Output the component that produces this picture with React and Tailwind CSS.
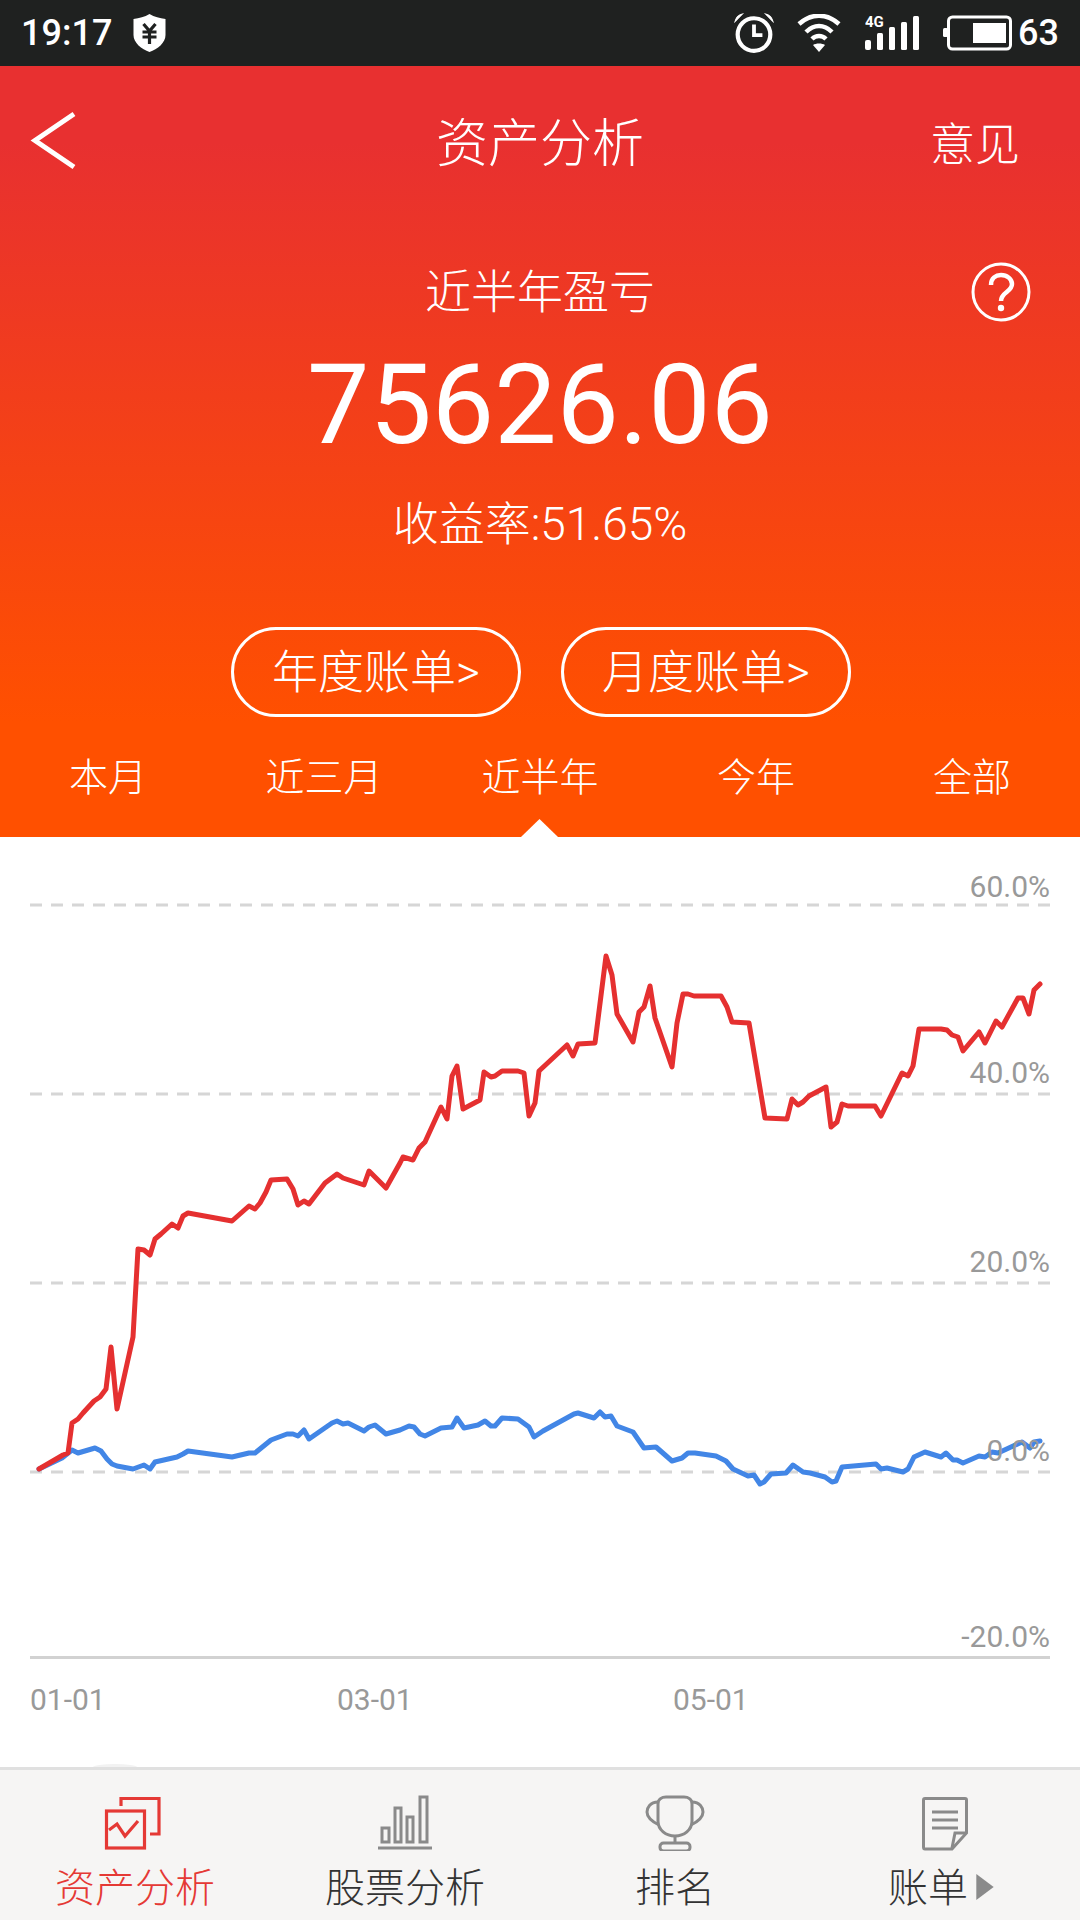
import React from "react";

const redLine =
  "39,1469 63,1455 68,1453 72,1423 78,1419 83,1413 94,1401 100,1397 106,1389 111,1347 117,1409 133,1337 138,1249 144,1250 150,1255 155,1239 161,1234 172,1224 178,1228 183,1216 188,1213 232,1221 249,1206 255,1209 260,1203 266,1192 271,1180 287,1179 293,1189 298,1205 304,1201 309,1204 325,1183 337,1174 343,1178 364,1185 369,1171 386,1188 400,1163 403,1157 413,1160 419,1148 425,1142 441,1107 447,1119 452,1076 457,1066 463,1109 480,1100 484,1072 491,1077 495,1076 502,1071 518,1071 524,1073 529,1116 535,1103 539,1071 567,1045 573,1056 578,1044 595,1043 606,956 612,975 617,1014 633,1042 639,1012 644,1007 650,986 655,1018 672,1067 677,1023 683,994 688,994 694,996 721,996 727,1007 732,1022 749,1023 765,1118 787,1119 792,1099 798,1105 803,1102 809,1096 826,1087 831,1127 837,1122 842,1104 848,1106 875,1106 881,1116 902,1073 908,1076 913,1066 919,1029 941,1029 947,1030 952,1035 958,1037 963,1051 979,1032 985,1043 996,1021 1002,1027 1018,998 1023,998 1029,1014 1034,990 1040,984";

const blueLine =
  "39,1469 62,1458 72,1450 78,1453 95,1448 101,1451 107,1459 112,1464 117,1466 133,1469 144,1465 150,1469 155,1462 177,1457 183,1454 188,1451 232,1457 249,1453 255,1453 271,1440 287,1434 293,1434 298,1436 304,1430 309,1439 332,1423 337,1421 343,1424 348,1423 364,1431 369,1427 375,1425 386,1434 400,1430 409,1426 414,1427 420,1434 425,1436 441,1428 452,1427 457,1418 464,1428 478,1425 485,1421 491,1426 495,1426 502,1418 518,1419 529,1427 534,1437 543,1431 574,1414 578,1413 594,1418 600,1412 605,1417 611,1416 617,1426 633,1432 644,1448 656,1447 672,1461 682,1458 688,1453 695,1453 716,1456 726,1461 733,1469 748,1476 754,1475 760,1484 764,1482 771,1474 786,1473 793,1465 803,1472 810,1473 825,1477 832,1482 836,1481 842,1467 876,1464 881,1469 887,1468 903,1472 908,1469 914,1457 925,1452 941,1457 946,1453 953,1460 957,1460 963,1463 979,1456 985,1457 992,1452 998,1453 1022,1442 1030,1448 1034,1442 1040,1441";

const grid = [905, 1094, 1283, 1472];

const yLabels = [
  { text: "60.0%", y: 897 },
  { text: "40.0%", y: 1083 },
  { text: "20.0%", y: 1272 },
  { text: "0.0%", y: 1461 },
  { text: "-20.0%", y: 1647 },
];

const xLabels = [
  { text: "01-01", x: 30 },
  { text: "03-01", x: 337 },
  { text: "05-01", x: 673 },
];

const tabs = ["本月", "近三月", "近半年", "今年", "全部"];

const StatusBar = () => (
  <div className="h-[66px] shrink-0 bg-[#1f2120] flex items-center justify-between pl-[21px] pr-[21px] text-white text-[36px] font-medium">
    <div className="flex items-center gap-[21px]">
      <span>19:17</span>
      <svg width="33" height="38" viewBox="0 0 32 38">
        <path d="M16 0 C21 3 26 4 32 5 V21 C32 29 24 35 16 38 C8 35 0 29 0 21 V5 C6 4 11 3 16 0 Z" fill="#fff" />
        <path d="M10 10 L16 17 L22 10 M9 18 H23 M9 23 H23 M16 17 V30" stroke="#1f2120" strokeWidth="3.2" fill="none" />
      </svg>
    </div>
    <div className="flex items-center">
      <svg width="40" height="40" viewBox="0 0 38 38" className="mr-[23px]">
        <circle cx="19" cy="20.5" r="15.5" fill="none" stroke="#fff" strokeWidth="4" />
        <path d="M19 11 V21 H27" fill="none" stroke="#fff" strokeWidth="3.6" />
        <path d="M1 8 C2 4 4 2 8 1 Z M37 8 C36 4 34 2 30 1 Z" fill="#fff" stroke="#fff" strokeWidth="1" />
      </svg>
      <svg width="44" height="38" viewBox="0 0 44 38" className="mr-[24px]">
        <path d="M2 10 C14 -1 30 -1 42 10" fill="none" stroke="#fff" strokeWidth="4.5" />
        <path d="M9 18 C17 10 27 10 35 18" fill="none" stroke="#fff" strokeWidth="4.5" />
        <path d="M15 25 C19 21 25 21 29 25" fill="none" stroke="#fff" strokeWidth="4.5" />
        <path d="M22 38 L16 31 C19 29 25 29 28 31 Z" fill="#fff" />
      </svg>
      <svg width="56" height="38" viewBox="0 0 56 38" className="mr-[22px]">
        <text x="0" y="13" fontSize="15" fontWeight="700" fill="#fff">4G</text>
        <rect x="0" y="26" width="6" height="10" rx="2" fill="#fff" />
        <rect x="12" y="19" width="6" height="17" rx="1.5" fill="#fff" />
        <rect x="24" y="13" width="6" height="23" rx="1.5" fill="#fff" />
        <rect x="36" y="8" width="6" height="28" rx="1.5" fill="#fff" />
        <rect x="48" y="2" width="6" height="34" rx="1.5" fill="#fff" />
      </svg>
      <svg width="70" height="36" viewBox="0 0 70 36" className="mr-[5px]">
        <rect x="0" y="13" width="5" height="9" rx="1.5" fill="#fff" />
        <rect x="5.5" y="2" width="62" height="32" rx="4" fill="none" stroke="#fff" strokeWidth="3" />
        <rect x="30" y="8" width="33" height="20" fill="#fff" />
      </svg>
      <span>63</span>
    </div>
  </div>
);

const Header = () => (
  <div className="h-[771px] shrink-0 relative flex flex-col items-center text-white font-light bg-linear-to-b/srgb from-[#e83030] from-10% to-[#ff5000] to-85%">
    <div className="w-full h-[154px] shrink-0 grid grid-cols-3 items-center">
      <svg width="50" height="60" viewBox="0 0 50 60" className="ml-[29px] -mt-[5px]">
        <path d="M45 3 L6 29.5 L45 56" fill="none" stroke="#fff" strokeWidth="5" />
      </svg>
      <span className="text-[52px] leading-none text-center mt-[3px]">资产分析</span>
      <span className="text-[45px] leading-none text-right mr-[60px] mt-[4px]">意见</span>
    </div>
    <div className="mt-[46px] h-[52px] w-full flex items-center justify-center relative">
      <span className="text-[46px] leading-none">近半年盈亏</span>
      <svg width="60" height="60" viewBox="0 0 60 60" className="absolute left-[971px] top-[-4px]">
        <circle cx="30" cy="30" r="28" fill="none" stroke="#fff" strokeWidth="3" />
        <path d="M20 23 C20 16 25 13 30 13 C36 13 41 17 41 22 C41 30 30 30 30 39" fill="none" stroke="#fff" strokeWidth="4.5" />
        <circle cx="30" cy="46" r="3.2" fill="#fff" />
      </svg>
    </div>
    <div className="mt-[31px] h-[112px] flex items-center text-[111px] leading-none font-normal">75626.06</div>
    <div className="mt-[37px] h-[52px] flex items-center text-[46px] leading-none">收益率:51.65%</div>
    <div className="mt-[77px] ml-[2px] flex gap-[40px]">
      <div className="w-[290px] h-[90px] rounded-[45px] border-[3px] border-white flex items-center justify-center text-[46px] leading-none">年度账单&gt;</div>
      <div className="w-[290px] h-[90px] rounded-[45px] border-[3px] border-white flex items-center justify-center text-[46px] leading-none">月度账单&gt;</div>
    </div>
    <div className="mt-[31px] w-full h-[60px] grid grid-cols-5">
      {tabs.map((t) => (
        <div key={t} className="flex items-center justify-center text-[39px] leading-none">{t}</div>
      ))}
    </div>
    <div className="absolute left-[521px] bottom-0 w-[37px] h-[18px] bg-white [clip-path:polygon(50%_0,100%_100%,0_100%)]"></div>
  </div>
);

const Chart = () => (
  <div className="h-[930px] shrink-0 bg-white">
    <svg width="1080" height="930" viewBox="0 837 1080 930" className="block">
      {grid.map((y) => (
        <line key={y} x1="30" x2="1050" y1={y} y2={y} stroke="#d6d6d6" strokeWidth="3" strokeDasharray="12 9" />
      ))}
      <line x1="30" x2="1050" y1="1657.5" y2="1657.5" stroke="#d2d2d2" strokeWidth="3" />
      <polyline points={blueLine} fill="none" stroke="#4286e6" strokeWidth="5" strokeLinejoin="round" strokeLinecap="round" />
      <polyline points={redLine} fill="none" stroke="#e53030" strokeWidth="5" strokeLinejoin="round" strokeLinecap="round" />
      {yLabels.map((l) => (
        <text key={l.text} x="1050" y={l.y} textAnchor="end" fontSize="30" fill="#999">{l.text}</text>
      ))}
      {xLabels.map((l) => (
        <text key={l.text} x={l.x} y="1710" fontSize="30" fill="#999">{l.text}</text>
      ))}
      <ellipse cx="115" cy="1767" rx="22" ry="3" fill="#f2f2f2" />
    </svg>
  </div>
);

const BottomNav = () => (
  <div className="flex-1 bg-[#f6f5f4] border-t-[3px] border-[#e0e0e0] grid grid-cols-4 text-[40px] leading-none font-light text-[#333]">
    <div className="flex flex-col items-center pt-[25px]">
      <svg width="58" height="56" viewBox="0 0 58 56" className="-ml-[7px]">
        <g fill="none" stroke="#e53935" strokeWidth="3.2">
          <path d="M18 11 V3.5 H56 V39 H47" />
          <rect x="3.5" y="16" width="38" height="37" />
          <path d="M6 35 L14 29 L22 41 L35 26" />
        </g>
      </svg>
      <span className="mt-[18px] text-[#e53935]">资产分析</span>
    </div>
    <div className="flex flex-col items-center pt-[25px]">
      <svg width="56" height="56" viewBox="0 0 56 56">
        <g fill="none" stroke="#8a8a8a" strokeWidth="3">
          <rect x="5" y="33" width="7" height="14" />
          <rect x="18" y="13" width="6" height="34" />
          <rect x="30" y="22" width="6" height="25" />
          <rect x="43" y="2" width="7" height="45" />
          <path d="M1 53 H55" />
        </g>
      </svg>
      <span className="mt-[18px]">股票分析</span>
    </div>
    <div className="flex flex-col items-center pt-[25px]">
      <svg width="60" height="56" viewBox="0 0 60 56">
        <g fill="none" stroke="#8a8a8a" strokeWidth="3">
          <path d="M13 9 C13 4 17 2 21 2 H39 C43 2 47 4 47 9 V26 C47 35 39 41 30 41 C21 41 13 35 13 26 Z" />
          <path d="M13 7 C5 7 2 13 2 17 C2 23 8 27 14 30" />
          <path d="M47 7 C55 7 58 13 58 17 C58 23 52 27 46 30" />
          <path d="M30 41 V48" />
          <rect x="15" y="48" width="30" height="8" rx="3.5" />
        </g>
      </svg>
      <span className="mt-[18px]">排名</span>
    </div>
    <div className="flex flex-col items-center pt-[25px]">
      <svg width="46" height="56" viewBox="0 0 46 56">
        <g fill="none" stroke="#8a8a8a" strokeWidth="3">
          <path d="M3 3.5 H43 C44 3.5 44.5 4 44.5 5 V38 L30 54 H3 C2 54 1.5 53.5 1.5 52 V5 C1.5 4 2 3.5 3 3.5 Z" />
          <path d="M10 17 H36 M10 25 H36 M10 33 H36" />
          <path d="M44 38 H33 L30 53" />
        </g>
      </svg>
      <div className="mt-[18px] -ml-[8px] flex items-center">
        <span>账单</span>
        <svg width="18" height="26" viewBox="0 0 16 24" className="ml-[8px] -mt-[4px]">
          <path d="M0 0 L16 12 L0 24 Z" fill="#8a8a8a" />
        </svg>
      </div>
    </div>
  </div>
);

export default function App() {
  return (
    <div className="w-[1080px] h-[1920px] flex flex-col overflow-hidden font-['Roboto','Noto_Sans_CJK_SC',sans-serif]">
      <StatusBar />
      <Header />
      <Chart />
      <BottomNav />
    </div>
  );
}
